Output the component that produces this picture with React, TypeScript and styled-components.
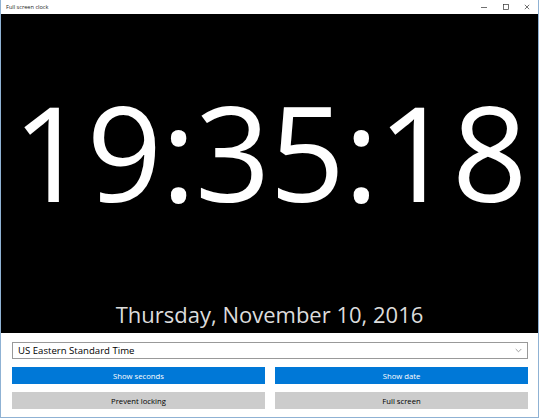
import React from "react";
import styled, { createGlobalStyle } from "styled-components";

const Global = createGlobalStyle`
  html, body { margin: 0; padding: 0; background: #fff; }
  body { width: 539px; height: 418px; overflow: hidden; font-family: "Open Sans", "Noto Sans", sans-serif; }
`;

const Window = styled.div`
  box-sizing: border-box;
  width: 539px;
  height: 418px;
  border: 1px solid #8fb2d4;
  border-top: none;
  display: flex;
  flex-direction: column;
  background: #fff;
`;

const TitleBar = styled.div`
  height: 14px;
  display: flex;
  align-items: center;
  justify-content: space-between;
  background: #fff;
`;

const Title = styled.span`
  font-size: 5.6px;
  color: #222;
  padding-left: 5px;
`;

const Controls = styled.div`
  display: flex;
  height: 100%;
  padding-right: 0px;
`;

const CtrlBtn = styled.div`
  width: 21.5px;
  height: 14px;
  display: flex;
  align-items: center;
  justify-content: center;
`;

const Screen = styled.div`
  flex: 1;
  background: #000;
  display: flex;
  flex-direction: column;
  align-items: center;
  overflow: hidden;
`;

const Time = styled.div`
  font-family: "Open Sans", sans-serif;
  color: #fff;
  font-size: 132px;
  line-height: 1;
  margin-top: 71px;
  letter-spacing: -1px;
`;

const DateText = styled.div`
  font-family: "Open Sans", sans-serif;
  color: #dcdcdc;
  font-size: 22px;
  margin-top: auto;
  margin-bottom: 4px;
`;

const Panel = styled.div`
  height: 84px;
  box-sizing: border-box;
  padding: 9px 10px 0 11px;
  display: flex;
  flex-direction: column;
  gap: 8px;
`;

const Select = styled.div`
  height: 17px;
  box-sizing: border-box;
  border: 1px solid #999;
  display: flex;
  align-items: center;
  justify-content: space-between;
  padding: 0 5px 0 5px;
  font-size: 9.6px;
  color: #000;
`;

const Row = styled.div`
  display: grid;
  grid-template-columns: 1fr 1fr;
  gap: 10px;
`;

const Button = styled.div<{ $primary?: boolean }>`
  height: 17px;
  display: flex;
  align-items: center;
  justify-content: center;
  font-size: 7.7px;
  background: ${(p) => (p.$primary ? "#0078d7" : "#cccccc")};
  color: ${(p) => (p.$primary ? "#fff" : "#000")};
`;

export default function App() {
  return (
    <>
      <Global />
      <Window>
        <TitleBar>
          <Title>Full screen clock</Title>
          <Controls>
            <CtrlBtn>
              <svg width="6" height="6" viewBox="0 0 6 6"><path d="M0 3.5h6" stroke="#333" strokeWidth="0.7" /></svg>
            </CtrlBtn>
            <CtrlBtn>
              <svg width="6" height="6" viewBox="0 0 6 6"><rect x="0.5" y="0.5" width="5" height="5" fill="none" stroke="#333" strokeWidth="0.7" /></svg>
            </CtrlBtn>
            <CtrlBtn>
              <svg width="6" height="6" viewBox="0 0 6 6"><path d="M0.8 0.8L5.2 5.2M5.2 0.8L0.8 5.2" stroke="#333" strokeWidth="0.7" /></svg>
            </CtrlBtn>
          </Controls>
        </TitleBar>
        <Screen>
          <Time>19:35:18</Time>
          <DateText>Thursday, November 10, 2016</DateText>
        </Screen>
        <Panel>
          <Select>
            <span>US Eastern Standard Time</span>
            <svg width="7" height="5" viewBox="0 0 7 5"><path d="M0.7 1l2.8 2.8L6.3 1" fill="none" stroke="#888" strokeWidth="0.8" /></svg>
          </Select>
          <Row>
            <Button $primary>Show seconds</Button>
            <Button $primary>Show date</Button>
          </Row>
          <Row>
            <Button>Prevent locking</Button>
            <Button>Full screen</Button>
          </Row>
        </Panel>
      </Window>
    </>
  );
}
